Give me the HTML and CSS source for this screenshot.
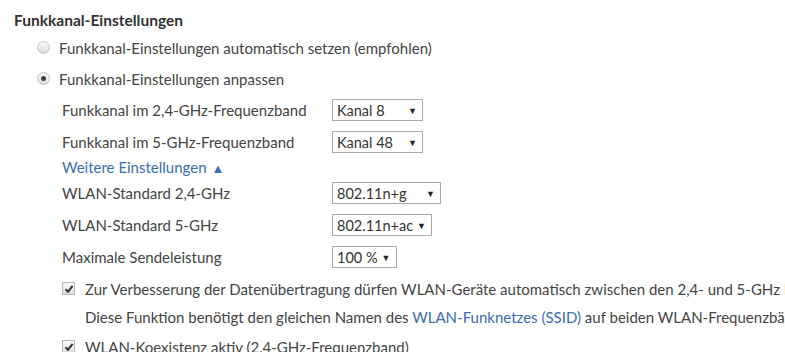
FILE: index.html
```html
<!DOCTYPE html>
<html lang="de">
<head>
    <meta charset="UTF-8">
    <title>Funkkanal-Einstellungen</title>
    <link rel="stylesheet" href="styles.css">
</head>
<body>
    <div class="section">
        <h3 class="section-title">Funkkanal-Einstellungen</h3>

        <div class="option-row">
            <span class="radio"></span>
            <span>Funkkanal-Einstellungen automatisch setzen (empfohlen)</span>
        </div>
        <div class="option-row">
            <span class="radio checked"></span>
            <span>Funkkanal-Einstellungen anpassen</span>
        </div>

        <div class="sub-options">
            <div class="form-row">
                <span class="form-label">Funkkanal im 2,4-GHz-Frequenzband</span>
                <div class="select select-wide"><span>Kanal 8</span><span class="arrow">▼</span></div>
            </div>
            <div class="form-row">
                <span class="form-label">Funkkanal im 5-GHz-Frequenzband</span>
                <div class="select select-wide"><span>Kanal 48</span><span class="arrow">▼</span></div>
            </div>

            <a class="more-link" href="#">Weitere Einstellungen<span class="up">▲</span></a>

            <div class="form-row">
                <span class="form-label">WLAN-Standard 2,4-GHz</span>
                <div class="select select-std"><span>802.11n+g</span><span class="arrow">▼</span></div>
            </div>
            <div class="form-row">
                <span class="form-label">WLAN-Standard 5-GHz</span>
                <div class="select"><span>802.11n+ac</span><span class="arrow">▼</span></div>
            </div>
            <div class="form-row">
                <span class="form-label">Maximale Sendeleistung</span>
                <div class="select"><span>100 %</span><span class="arrow">▼</span></div>
            </div>

            <div class="check-row">
                <span class="checkbox"><svg viewBox="0 0 10 10" width="10" height="10"><path d="M1.5 5.2 L4 7.8 L8.6 1.8" fill="none" stroke="#333" stroke-width="2"/></svg></span>
                <div class="check-text">
                    <div>Zur Verbesserung der Datenübertragung dürfen WLAN-Geräte automatisch zwischen den 2,4- und 5-GHz Frequenzbändern wechseln.</div>
                    <div>Diese Funktion benötigt den gleichen Namen des <a href="#">WLAN-Funknetzes (SSID)</a> auf beiden WLAN-Frequenzbändern.</div>
                </div>
            </div>
            <div class="check-row">
                <span class="checkbox"><svg viewBox="0 0 10 10" width="10" height="10"><path d="M1.5 5.2 L4 7.8 L8.6 1.8" fill="none" stroke="#333" stroke-width="2"/></svg></span>
                <div class="check-text">
                    <div>WLAN-Koexistenz aktiv (2,4-GHz-Frequenzband)</div>
                </div>
            </div>
        </div>
    </div>
</body>
</html>
```

FILE: styles.css
```css
html {
    overflow: hidden;
}

body {
    margin: 0;
    background: #fff;
    color: #444;
    font-family: Lato, "Open Sans", sans-serif;
    font-size: 15px;
    white-space: nowrap;
}

a {
    color: #3a6db3;
    text-decoration: none;
}

.section {
    padding: 11px 0 0 14px;
}

.section-title {
    margin: 0 0 3px;
    font-size: 15.5px;
    font-weight: bold;
    color: #333;
}

.option-row {
    display: flex;
    align-items: center;
    gap: 9px;
    height: 31px;
    padding-left: 23px;
}

.radio {
    width: 11px;
    height: 11px;
    border: 1px solid #c4c4c4;
    border-radius: 50%;
    background: linear-gradient(#f8f8f8, #dcdcdc);
    display: flex;
    align-items: center;
    justify-content: center;
}

.radio.checked::after {
    content: "";
    width: 5px;
    height: 5px;
    border-radius: 50%;
    background: #444;
}

.sub-options {
    padding-left: 48px;
}

.form-row {
    display: flex;
    align-items: center;
    height: 32px;
}

.form-label {
    width: 270px;
}

.select {
    display: flex;
    align-items: center;
    gap: 4px;
    height: 20px;
    padding: 0 5px 0 4px;
    border: 1px solid #a9a9a9;
    background: #fff;
    color: #333;
    font-size: 14.5px;
}

.select-wide {
    width: 80px;
    justify-content: space-between;
}

.select-std {
    width: 98px;
    justify-content: space-between;
}

.arrow {
    font-size: 9px;
    color: #222;
}

.more-link {
    display: block;
    height: 19px;
    line-height: 19px;
}

.more-link .up {
    margin-left: 5px;
    font-size: 13px;
}

.check-row {
    display: flex;
    align-items: flex-start;
    gap: 10px;
    margin-top: 2px;
}

.checkbox {
    flex: none;
    width: 11px;
    height: 11px;
    margin-top: 7px;
    border: 1px solid #b8b8b8;
    background: linear-gradient(#fafafa, #dedede);
    display: flex;
    align-items: center;
    justify-content: center;
}

.check-text div {
    line-height: 28px;
}
```
